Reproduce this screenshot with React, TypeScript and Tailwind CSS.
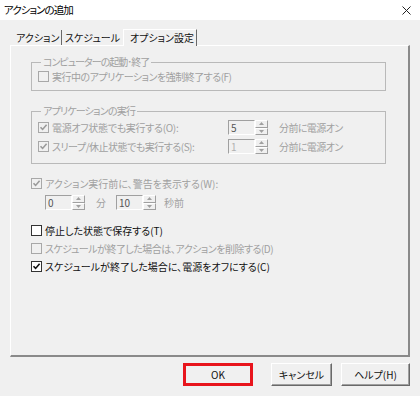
import React from "react";

const font = { fontFamily: "'Noto Sans CJK JP', 'Noto Sans', sans-serif", fontFeatureSettings: "'palt'" } as React.CSSProperties;

function Check({ checked = false, disabled = false }: { checked?: boolean; disabled?: boolean }) {
  return (
    <span
      className={
        "relative inline-flex h-[11px] w-[11px] shrink-0 items-center justify-center border " +
        (disabled ? "border-[#a8a8a8] bg-[#f0f0f0]" : "border-[#333333] bg-white")
      }
    >
      {checked && (
        <svg width="9" height="9" viewBox="0 0 9 9">
          <path d="M1.5 4.2 L3.6 6.4 L7.6 1.8" fill="none" stroke={disabled ? "#9a9a9a" : "#111"} strokeWidth="1.6" />
        </svg>
      )}
    </span>
  );
}

function Spin({ value, w = 27, dim = false }: { value: string; w?: number; dim?: boolean }) {
  return (
    <div className="flex h-[15px] items-stretch">
      <div
        className={"flex items-center border border-t-[#a0a0a0] border-l-[#a0a0a0] border-r-white border-b-white bg-[#f0f0f0] pl-[2px] text-[10px] leading-none " + (dim ? "text-[#b0b0b0]" : "text-[#555]")}
        style={{ width: w }}
      >
        {value}
      </div>
      <div className="flex w-[13px] flex-col">
        <div className="flex flex-1 items-center justify-center border border-t-white border-l-white border-r-[#a0a0a0] border-b-[#a0a0a0]">
          <svg width="5" height="3" viewBox="0 0 5 3"><path d="M2.5 0 L5 3 L0 3Z" fill="#a0a0a0" /></svg>
        </div>
        <div className="flex flex-1 items-center justify-center border border-t-white border-l-white border-r-[#a0a0a0] border-b-[#a0a0a0]">
          <svg width="5" height="3" viewBox="0 0 5 3"><path d="M0 0 L5 0 L2.5 3Z" fill="#a0a0a0" /></svg>
        </div>
      </div>
    </div>
  );
}

function Btn({ children, w }: { children: React.ReactNode; w: number }) {
  return (
    <div
      className="flex h-[23px] items-center justify-center border border-t-white border-l-white border-r-[#696969] border-b-[#696969] bg-[#f0f0f0] text-[10px] text-[#111]"
      style={{ width: w, boxShadow: "inset -1px -1px 0 #a0a0a0" }}
    >
      {children}
    </div>
  );
}

export default function App() {
  const dis = "text-[#a0a0a0]";
  return (
    <div className="flex h-[396px] w-[420px] flex-col overflow-hidden whitespace-nowrap bg-[#f0f0f0] text-[10px] text-[#111]" style={font}>
      {/* title bar */}
      <div className="flex h-[20px] items-center justify-between bg-white pl-[4px] pr-[9px]">
        <span className="text-[10.5px] tracking-[-1px] text-black">アクションの追加</span>
        <svg width="9" height="9" viewBox="0 0 9 9">
          <path d="M0.5 0.5 L8.5 8.5 M8.5 0.5 L0.5 8.5" stroke="#222" strokeWidth="1" />
        </svg>
      </div>

      {/* tabs */}
      <div className="ml-[11px] mt-[9px] flex h-[16px] items-end">
        <div className="flex h-[15px] w-[51px] items-center border-r border-r-[#696969] pl-[5px] leading-none">アクション</div>
        <div className="flex h-[15px] w-[61px] items-center pl-[3px] leading-none">スケジュール</div>
        <div className="relative z-10 -mb-px flex h-[17px] w-[74px] items-center border-l border-t border-l-white border-t-white border-r border-r-[#696969] bg-[#f0f0f0] pl-[6px] leading-none">オプション設定</div>
      </div>

      {/* panel */}
      <div className="ml-[10px] flex h-[312px] w-[400px] flex-col border-l border-t border-l-white border-t-white border-r-2 border-b-2 border-r-[#8a8a8a] border-b-[#8a8a8a] pl-[20px] pt-[9px]">
        <fieldset className="h-[36px] w-[355px] border border-[#b9b9b9] pl-[6px]">
          <legend className={"ml-[3px] px-[2px] leading-[14px] tracking-[-1px] " + dis}>コンピューターの起動･終了</legend>
          <div className="flex items-center gap-[3px]">
            <Check disabled />
            <span className={"tracking-[-0.5px] " + dis}>実行中のアプリケーションを強制終了する(F)</span>
          </div>
        </fieldset>

        <fieldset className="mt-[13px] h-[60px] w-[355px] border border-[#b9b9b9] pl-[6px]">
          <legend className={"ml-[3px] px-[2px] leading-[14px] tracking-[-0.8px] " + dis}>アプリケーションの実行</legend>
          <div className="flex h-[19px] items-center">
            <div className="flex w-[190px] items-center gap-[3px]">
              <Check checked disabled />
              <span className={"tracking-[-0.3px] " + dis}>電源オフ状態でも実行する(O):</span>
            </div>
            <Spin value="5" />
            <span className={"ml-[11px] tracking-[-0.6px] " + dis}>分前に電源オン</span>
          </div>
          <div className="flex h-[19px] items-center">
            <div className="flex w-[190px] items-center gap-[3px]">
              <Check checked disabled />
              <span className={"tracking-[-0.5px] " + dis}>スリープ/休止状態でも実行する(S):</span>
            </div>
            <Spin value="1" dim />
            <span className={"ml-[11px] tracking-[-0.6px] " + dis}>分前に電源オン</span>
          </div>
        </fieldset>

        <div className="mt-[12px] flex h-[14px] items-center gap-[3px]">
          <Check checked disabled />
          <span className={dis}>アクション実行前に、警告を表示する(W):</span>
        </div>
        <div className="ml-[14px] mt-[5px] flex h-[15px] items-center">
          <Spin value="0" />
          <span className={"ml-[11px] " + dis}>分</span>
          <div className="ml-[10px]">
            <Spin value="10" />
          </div>
          <span className={"ml-[8px] " + dis}>秒前</span>
        </div>

        <div className="mt-[13px] flex h-[14px] items-center gap-[3px]">
          <Check />
          <span>停止した状態で保存する(T)</span>
        </div>
        <div className="mt-[4px] flex h-[14px] items-center gap-[3px]">
          <Check disabled />
          <span className={"tracking-[-0.5px] " + dis}>スケジュールが終了した場合は、アクションを削除する(D)</span>
        </div>
        <div className="mt-[4px] flex h-[14px] items-center gap-[3px]">
          <Check checked />
          <span>スケジュールが終了した場合に、電源をオフにする(C)</span>
        </div>
      </div>

      {/* buttons */}
      <div className="ml-[183px] mt-[6px] flex items-center">
        <div className="flex h-[23px] w-[70px] items-center justify-center border-[3px] border-[#e8141c] bg-[#f0f0f0] text-[10px]">OK</div>
        <div className="ml-[18px]">
          <Btn w={61}>キャンセル</Btn>
        </div>
        <div className="ml-[9px]">
          <Btn w={69}>ヘルプ(H)</Btn>
        </div>
      </div>
    </div>
  );
}
